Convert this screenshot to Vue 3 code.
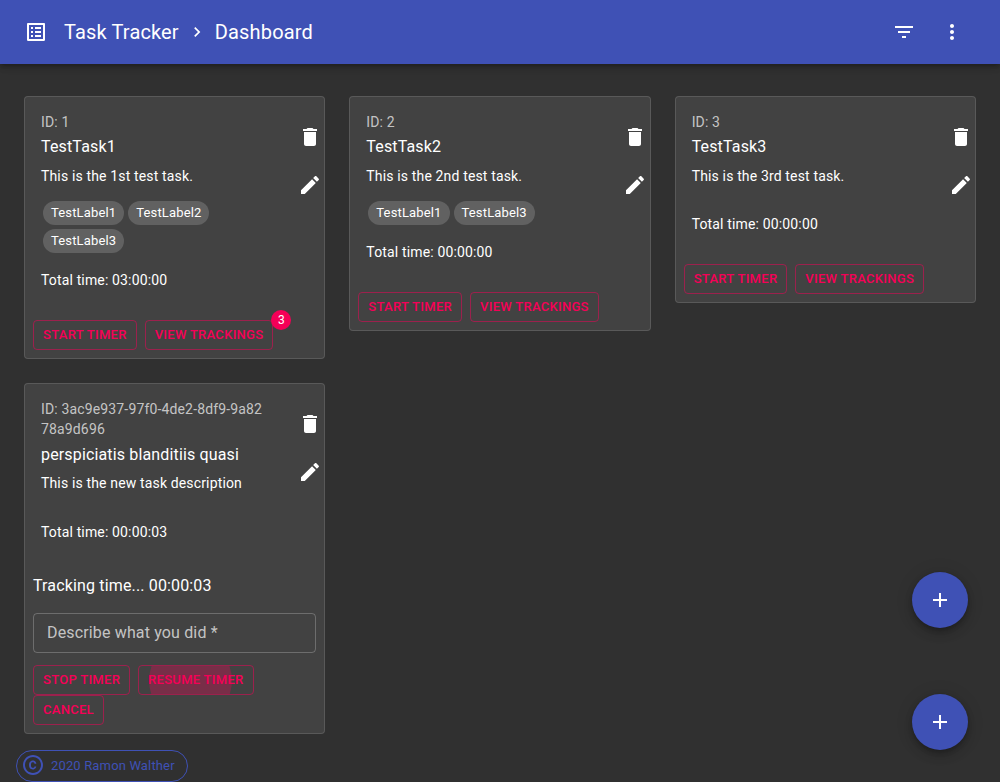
<template>
  <div class="page">
    <header class="appbar">
      <svg class="logo" viewBox="0 0 24 24"><path :d="icons.listAlt" /></svg>
      <nav class="crumbs">
        <span>Task Tracker</span>
        <svg class="sep" viewBox="0 0 24 24"><path :d="icons.chevron" /></svg>
        <span>Dashboard</span>
      </nav>
      <div class="appbar_actions">
        <button class="icon_btn"><svg viewBox="0 0 24 24"><path :d="icons.filter" /></svg></button>
        <button class="icon_btn"><svg viewBox="0 0 24 24"><path :d="icons.more" /></svg></button>
      </div>
    </header>

    <main class="task_grid">
      <section v-for="task in tasks" :key="task.id" class="card">
        <div class="card_content">
          <div class="card_text">
            <div class="task_id">ID: {{ task.id }}</div>
            <div class="task_title">{{ task.title }}</div>
            <div class="task_desc">{{ task.description }}</div>
            <div class="chips">
              <span v-for="label in task.labels" :key="label" class="chip">{{ label }}</span>
            </div>
            <div class="task_total">Total time: {{ task.total }}</div>
          </div>
          <div class="card_icons">
            <button class="icon_btn"><svg viewBox="0 0 24 24"><path :d="icons.trash" /></svg></button>
            <button class="icon_btn"><svg viewBox="0 0 24 24"><path :d="icons.edit" /></svg></button>
          </div>
        </div>

        <div v-if="task.tracking" class="tracking">
          <div class="tracking_time">Tracking time... {{ task.tracking }}</div>
          <div class="describe">Describe what you did *</div>
        </div>

        <div class="card_actions">
          <template v-if="task.tracking">
            <button class="btn">Stop timer</button>
            <button class="btn"><span class="ripple"></span>Resume timer</button>
            <button class="btn">Cancel</button>
          </template>
          <template v-else>
            <button class="btn">Start timer</button>
            <span class="badge_wrap">
              <button class="btn">View trackings</button>
              <span v-if="task.trackings" class="badge">{{ task.trackings }}</span>
            </span>
          </template>
        </div>
      </section>
    </main>

    <footer class="footer">
      <div class="copyright">
        <svg viewBox="0 0 24 24"><path :d="icons.copyright" /></svg>
        <span>2020 Ramon Walther</span>
      </div>
    </footer>

    <button class="fab fab_upper"><svg viewBox="0 0 24 24"><path :d="icons.add" /></svg></button>
    <button class="fab fab_lower"><svg viewBox="0 0 24 24"><path :d="icons.add" /></svg></button>
  </div>
</template>

<script setup>
const icons = {
  listAlt: "M19 5v14H5V5h14m1.1-2H3.9c-.5 0-.9.4-.9.9v16.2c0 .4.4.9.9.9h16.2c.4 0 .9-.5.9-.9V3.9c0-.5-.5-.9-.9-.9zM11 7h6v2h-6V7zm0 4h6v2h-6v-2zm0 4h6v2h-6zM7 7h2v2H7zm0 4h2v2H7zm0 4h2v2H7z",
  chevron: "M10 6L8.59 7.41 13.17 12l-4.58 4.59L10 18l6-6z",
  filter: "M10 18h4v-2h-4v2zM3 6v2h18V6H3zm3 7h12v-2H6v2z",
  more: "M12 8c1.1 0 2-.9 2-2s-.9-2-2-2-2 .9-2 2 .9 2 2 2zm0 2c-1.1 0-2 .9-2 2s.9 2 2 2 2-.9 2-2-.9-2-2-2zm0 6c-1.1 0-2 .9-2 2s.9 2 2 2 2-.9 2-2-.9-2-2-2z",
  trash: "M6 19c0 1.1.9 2 2 2h8c1.1 0 2-.9 2-2V7H6v12zM19 4h-3.5l-1-1h-5l-1 1H5v2h14V4z",
  edit: "M3 17.25V21h3.75L17.81 9.94l-3.75-3.75L3 17.25zM20.71 7.04c.39-.39.39-1.02 0-1.41l-2.34-2.34c-.39-.39-1.02-.39-1.41 0l-1.83 1.83 3.75 3.75 1.83-1.83z",
  add: "M19 13h-6v6h-2v-6H5v-2h6V5h2v6h6v2z",
  copyright: "M10.08 10.86c.05-.33.16-.62.3-.87s.34-.46.59-.62c.24-.15.54-.22.91-.23.23.01.44.05.63.13.2.09.38.21.52.36s.25.33.34.53.13.42.14.64h1.79c-.02-.47-.11-.9-.28-1.29s-.4-.73-.7-1.01-.66-.5-1.08-.66-.88-.23-1.39-.23c-.65 0-1.22.11-1.7.34s-.88.53-1.2.92-.56.84-.71 1.36S8 11.29 8 11.87v.27c0 .58.08 1.12.23 1.64s.39.97.71 1.35.72.69 1.2.91 1.05.34 1.7.34c.47 0 .91-.08 1.32-.23s.77-.36 1.08-.63.56-.58.74-.94.29-.74.3-1.15h-1.79c-.01.21-.06.4-.15.58s-.21.33-.36.46-.32.23-.52.3c-.19.07-.39.09-.6.1-.36-.01-.66-.08-.89-.23-.25-.16-.45-.37-.59-.62s-.25-.55-.3-.88-.08-.67-.08-1v-.27c0-.35.03-.68.08-1.01zM12 2C6.48 2 2 6.48 2 12s4.48 10 10 10 10-4.48 10-10S17.52 2 12 2zm0 18c-4.41 0-8-3.59-8-8s3.59-8 8-8 8 3.59 8 8-3.59 8-8 8z",
};

const tasks = [
  {
    id: "1",
    title: "TestTask1",
    description: "This is the 1st test task.",
    labels: ["TestLabel1", "TestLabel2", "TestLabel3"],
    total: "03:00:00",
    trackings: 3,
  },
  {
    id: "2",
    title: "TestTask2",
    description: "This is the 2nd test task.",
    labels: ["TestLabel1", "TestLabel3"],
    total: "00:00:00",
  },
  {
    id: "3",
    title: "TestTask3",
    description: "This is the 3rd test task.",
    labels: [],
    total: "00:00:00",
  },
  {
    id: "3ac9e937-97f0-4de2-8df9-9a8278a9d696",
    title: "perspiciatis blanditiis quasi",
    description: "This is the new task description",
    labels: [],
    total: "00:00:03",
    tracking: "00:00:03",
  },
];
</script>

<style>
html,
body {
  margin: 0;
  background: #303030;
  overflow: hidden;
}
</style>

<style scoped>
.page {
  position: relative;
  height: 782px;
  overflow: hidden;
  background: #303030;
  color: #fff;
  font-family: Roboto, "Liberation Sans", sans-serif;
  font-size: 14px;
  letter-spacing: 0.15px;
}
button {
  font-family: inherit;
  cursor: pointer;
}
svg {
  display: block;
  fill: currentColor;
}
.appbar {
  position: relative;
  display: flex;
  align-items: center;
  height: 64px;
  padding: 0 24px;
  box-sizing: border-box;
  background: #3f51b5;
  box-shadow: 0 2px 4px -1px rgba(0, 0, 0, 0.2), 0 4px 5px 0 rgba(0, 0, 0, 0.14), 0 1px 10px 0 rgba(0, 0, 0, 0.12);
}
.logo {
  width: 24px;
  height: 24px;
  margin-right: 16px;
}
.crumbs {
  display: flex;
  align-items: center;
  flex: 1;
  font-size: 20px;
  line-height: 1.6;
}
.sep {
  width: 20px;
  height: 20px;
  margin: 0 8px;
}
.appbar_actions {
  display: flex;
}
.icon_btn {
  display: flex;
  align-items: center;
  justify-content: center;
  flex: none;
  width: 48px;
  height: 48px;
  padding: 12px;
  border: 0;
  background: transparent;
  color: #fff;
}
.icon_btn svg {
  width: 24px;
  height: 24px;
}
.task_grid {
  display: grid;
  grid-template-columns: repeat(3, 1fr);
  gap: 24px;
  align-items: start;
  padding: 32px 24px 0;
}
.card {
  min-width: 0;
  background: #424242;
  border: 1px solid rgba(255, 255, 255, 0.12);
  border-radius: 4px;
}
.card_content {
  display: flex;
  padding: 16px 16px 21.95px;
}
.card_text {
  flex: 0 0 83.333%;
  min-width: 0;
}
.card_icons {
  flex: 1 0 0;
  min-width: 0;
  display: flex;
  flex-direction: column;
  align-items: flex-start;
  padding-left: 22.3px;
}
.task_id {
  margin-top: -1px;
  line-height: 20px;
  color: rgba(255, 255, 255, 0.7);
  word-break: break-all;
}
.task_title {
  margin-top: 3.3px;
  font-size: 16px;
  line-height: 24px;
}
.task_desc {
  margin-top: 6.7px;
  line-height: 20px;
}
.chips {
  display: flex;
  flex-wrap: wrap;
  margin: 13px 0 15.3px;
}
.chip {
  display: inline-flex;
  align-items: center;
  height: 24px;
  margin: 2px;
  padding: 0 8px;
  border-radius: 12px;
  background: #616161;
  font-size: 13px;
}
.task_total {
  line-height: 20px;
}
.tracking {
  padding: 0 8px;
  margin-top: 10.75px;
}
.tracking_time {
  font-size: 16px;
  line-height: 24px;
}
.describe {
  display: flex;
  align-items: center;
  box-sizing: border-box;
  height: 40px;
  margin-top: 15px;
  padding: 0 13px 2px;
  border: 1px solid rgba(255, 255, 255, 0.23);
  border-radius: 4px;
  font-size: 16px;
  color: rgba(255, 255, 255, 0.7);
}
.card_actions {
  display: flex;
  flex-wrap: wrap;
  column-gap: 8px;
  padding: 8px;
}
.tracking + .card_actions {
  padding-top: 12px;
}
.btn {
  position: relative;
  overflow: hidden;
  height: 30px;
  padding: 0 9px 2px;
  border: 1px solid rgba(245, 0, 87, 0.5);
  border-radius: 4px;
  background: transparent;
  color: #f50057;
  font-size: 13px;
  font-weight: 500;
  letter-spacing: 0.28px;
  text-transform: uppercase;
  white-space: nowrap;
}
.ripple {
  position: absolute;
  left: 10px;
  top: -27px;
  width: 83px;
  height: 83px;
  border-radius: 50%;
  background: rgba(245, 0, 87, 0.3);
}
.badge_wrap {
  position: relative;
  display: inline-flex;
}
.badge {
  position: absolute;
  top: -10px;
  right: -18px;
  display: flex;
  align-items: center;
  justify-content: center;
  width: 20px;
  height: 20px;
  border-radius: 50%;
  background: #f50057;
  font-size: 12px;
  letter-spacing: 0;
}
.footer {
  padding: 16px 16px 0;
}
.copyright {
  display: inline-flex;
  align-items: center;
  box-sizing: border-box;
  height: 32px;
  padding: 0 12px 2px 4px;
  border: 1px solid #3f51b5;
  border-radius: 16px;
  color: #3f51b5;
  font-size: 13px;
}
.copyright svg {
  width: 24px;
  height: 24px;
  margin-right: 6px;
}
.fab {
  position: absolute;
  left: 912px;
  display: flex;
  align-items: center;
  justify-content: center;
  width: 56px;
  height: 56px;
  padding: 0;
  border: 0;
  border-radius: 50%;
  background: #3f51b5;
  color: #fff;
  box-shadow: 0 3px 5px -1px rgba(0, 0, 0, 0.2), 0 6px 10px 0 rgba(0, 0, 0, 0.14), 0 1px 18px 0 rgba(0, 0, 0, 0.12);
}
.fab svg {
  width: 24px;
  height: 24px;
}
.fab_upper {
  top: 572px;
}
.fab_lower {
  top: 694px;
}
</style>
